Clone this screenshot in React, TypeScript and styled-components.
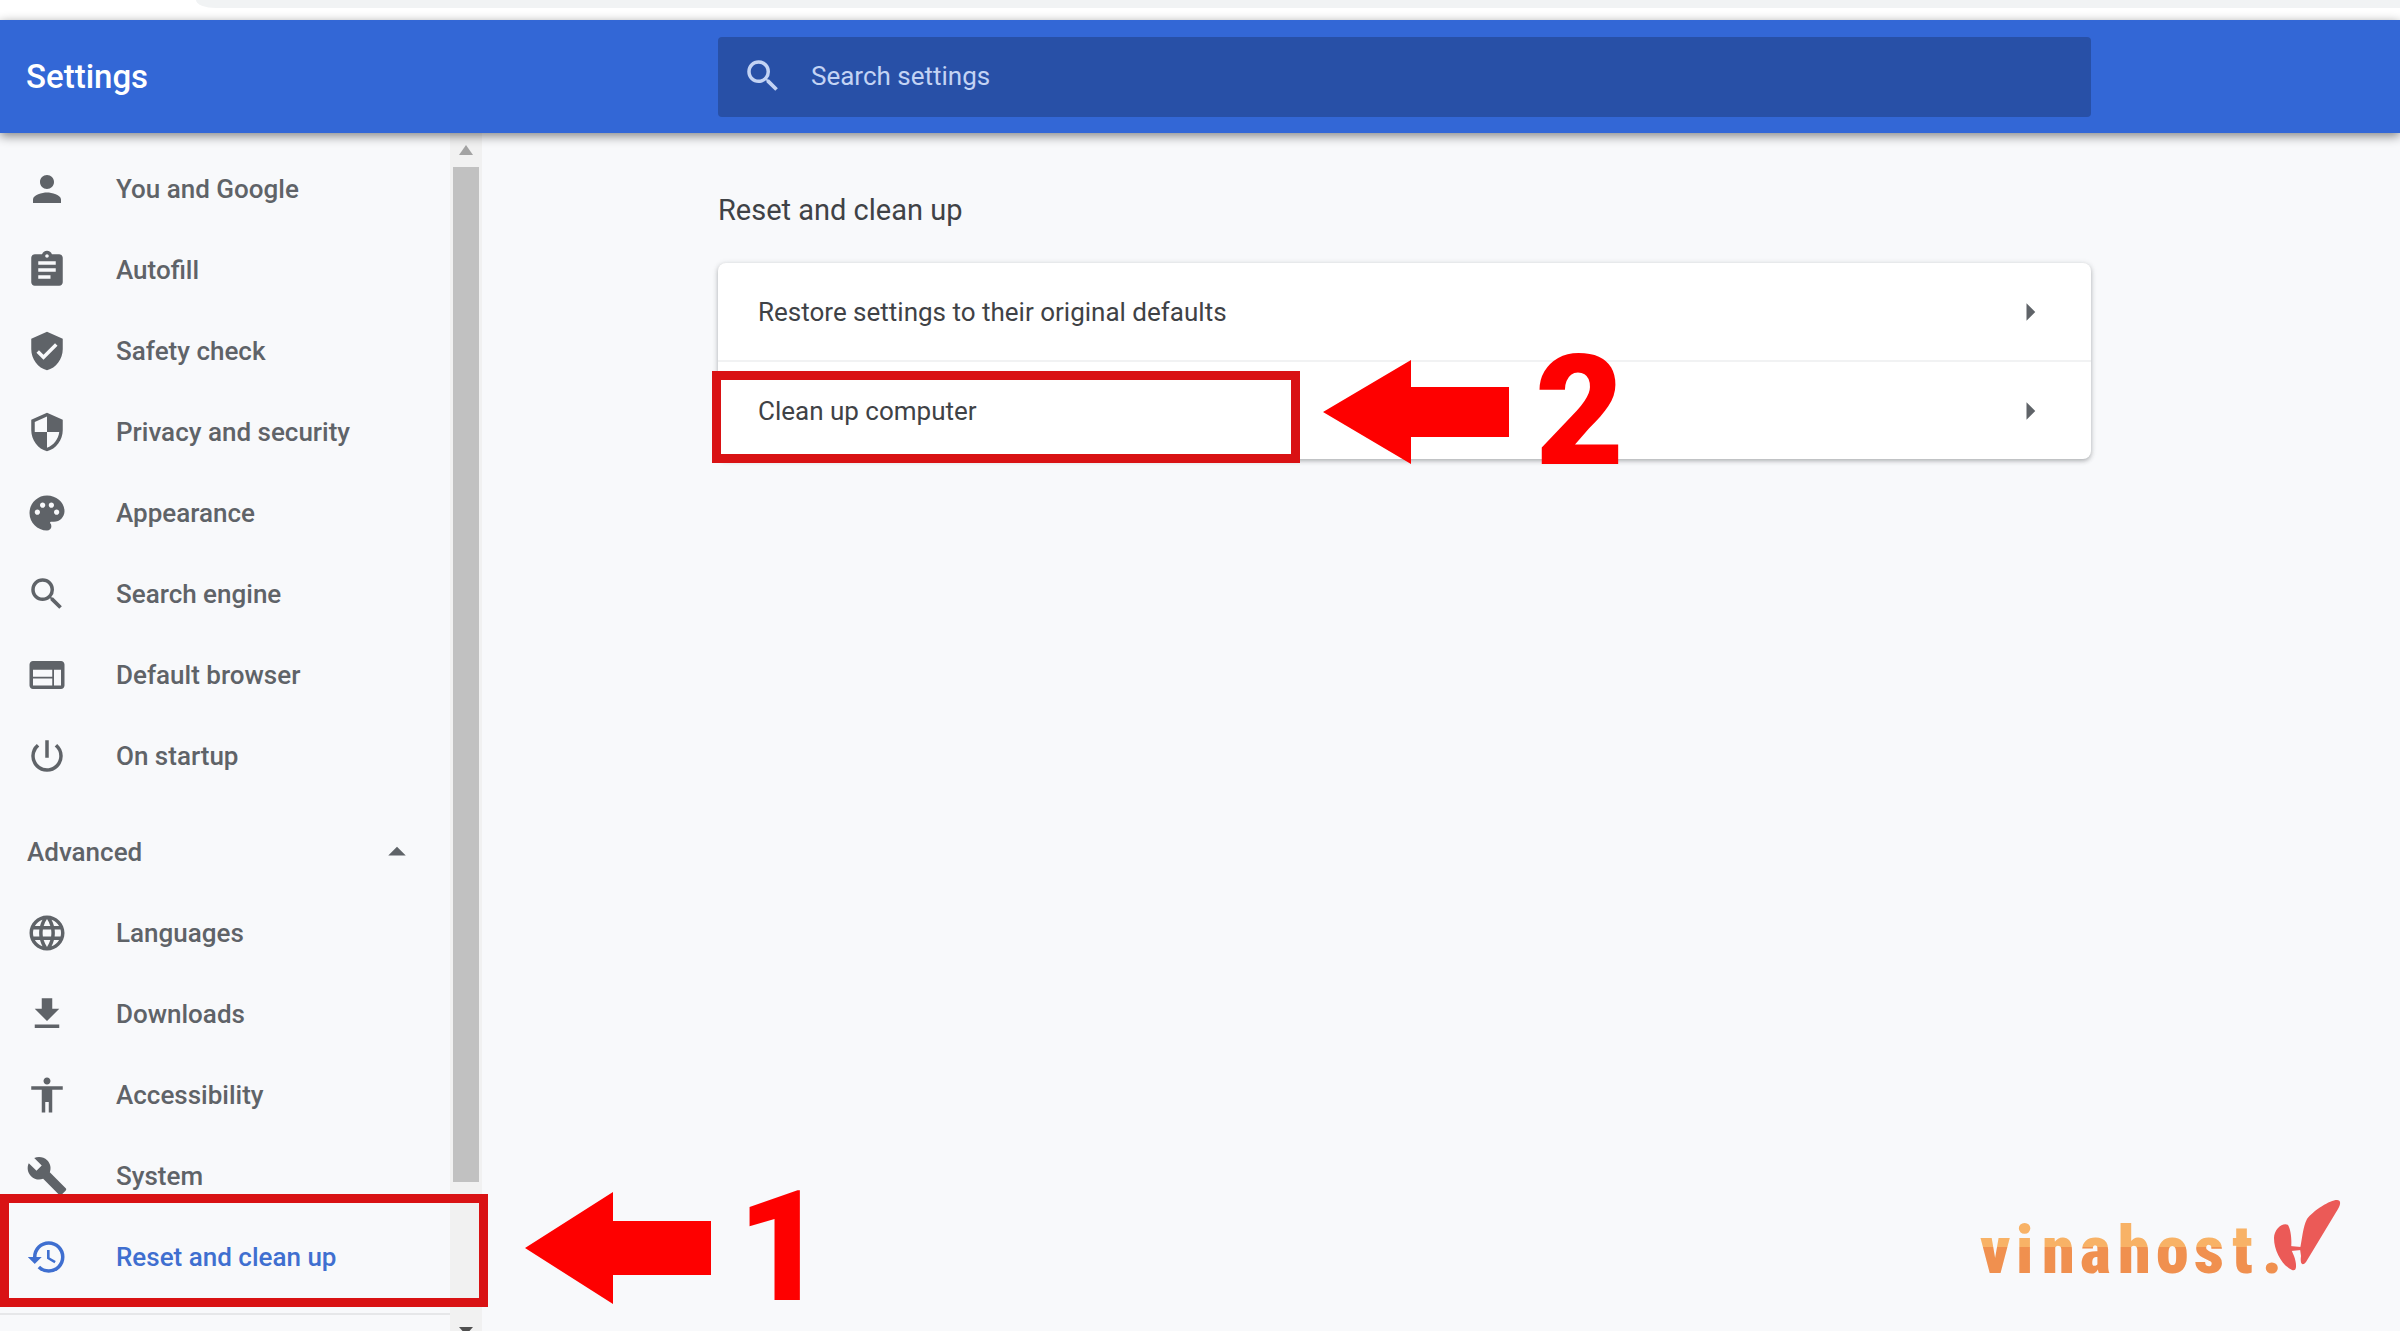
import React from 'react';
import styled, { createGlobalStyle } from 'styled-components';
import {
  MdAccessibility,
  MdArrowDropUp,
  MdArrowRight,
  MdAssignment,
  MdBuild,
  MdHistory,
  MdLanguage,
  MdPalette,
  MdPerson,
  MdPowerSettingsNew,
  MdSearch,
  MdSecurity,
  MdVerifiedUser,
  MdWeb,
} from 'react-icons/md';

const GlobalStyle = createGlobalStyle`
  * { box-sizing: border-box; }
  body {
    margin: 0;
    background: #f8f9fb;
    color: #3f4246;
    font-family: Roboto, "Liberation Sans", sans-serif;
    font-size: 26px;
    line-height: 32px;
  }
  button, input { font: inherit; color: inherit; }
`;

const Page = styled.div`
  display: flex;
  flex-direction: column;
  height: 100vh;
  overflow: hidden;
  position: relative;
`;

const BrowserStrip = styled.div`
  flex: none;
  height: 20px;
  padding-left: 196px;
  background: #fff;
`;

const AddressBarEdge = styled.div`
  height: 8px;
  background: #f1f3f4;
  border-bottom-left-radius: 20px 8px;
`;

const Header = styled.header`
  flex: none;
  display: flex;
  align-items: center;
  height: 113px;
  background: #3367d6;
  box-shadow: 0 3px 10px rgba(0, 0, 0, 0.48);
  z-index: 1;
`;

const Title = styled.h1`
  flex: none;
  width: 718px;
  margin: 0;
  padding-left: 26px;
  color: #fff;
  font-size: 33px;
  font-weight: 500;
  line-height: 40px;
`;

const SearchBox = styled.label`
  flex: 0 1 1373px;
  display: flex;
  align-items: center;
  gap: 27px;
  height: 80px;
  padding: 0 24px 2px;
  border-radius: 4px;
  background: #2850a7;
  color: #c3d3f4;
  svg { flex: none; width: 42px; height: 42px; }
`;

const SearchInput = styled.input`
  flex: 1;
  min-width: 0;
  padding: 0;
  border: 0;
  outline: 0;
  background: transparent;
  &::placeholder { color: #c3d3f4; opacity: 1; }
`;

const Body = styled.div`
  flex: 1;
  min-height: 0;
  display: flex;
`;

const Sidebar = styled.aside`
  flex: none;
  display: flex;
  width: 482px;
`;

const Nav = styled.nav`
  flex: 1;
  padding-top: 15px;
`;

const NavList = styled.ul`
  margin: 0;
  padding: 0;
  list-style: none;
`;

const NavRow = styled.li`
  position: relative;
`;

const NavLink = styled.a<{ $active?: boolean }>`
  display: flex;
  align-items: center;
  gap: 48px;
  height: 81px;
  padding-left: 26px;
  color: ${(p) => (p.$active ? '#3f6fd0' : '#5f6368')};
  font-weight: 500;
  text-decoration: none;
  svg { flex: none; width: 42px; height: 42px; }
`;

const AdvancedToggle = styled.button`
  display: flex;
  align-items: center;
  justify-content: space-between;
  width: 100%;
  height: 81px;
  margin-top: 15px;
  padding: 0 32px 0 27px;
  border: 0;
  background: none;
  color: #5f6368;
  font-weight: 500;
  svg { width: 42px; height: 42px; }
`;

const NavDivider = styled.hr`
  margin: 16px 0 0;
  border: 0;
  border-top: 2px solid #e6e7e9;
`;

const Scrollbar = styled.div`
  flex: none;
  display: flex;
  flex-direction: column;
  width: 32px;
  padding: 0 3px;
  background: #f1f1f1;
`;

const ScrollCap = styled.div<{ $height: number }>`
  flex: none;
  display: flex;
  justify-content: center;
  align-items: center;
  height: ${(p) => p.$height}px;
`;

const ScrollThumb = styled.div`
  flex: 7;
  background: #c1c1c1;
`;

const ScrollRest = styled.div`
  flex: 1;
`;

const Main = styled.main`
  flex: 1;
  padding: 57px 40px 0 236px;
`;

const SectionTitle = styled.h2`
  margin: 0 0 33px;
  font-size: 29px;
  font-weight: 400;
  line-height: 40px;
`;

const Card = styled.section`
  max-width: 1373px;
  border-radius: 8px;
  background: #fff;
  box-shadow: 0 2px 4px rgba(60, 64, 67, 0.3), 0 1px 6px rgba(60, 64, 67, 0.15);
`;

const CardRow = styled.div`
  position: relative;
  & + & { border-top: 2px solid #f1f2f3; }
`;

const CardButton = styled.button`
  display: flex;
  align-items: center;
  justify-content: space-between;
  width: 100%;
  height: 97px;
  padding: 0 40px;
  border: 0;
  background: none;
  text-align: left;
  svg { width: 42px; height: 42px; color: #5f6368; }
`;

/* Red frames and arrows that lie over the settings page */
const NavFrame = styled.div`
  position: absolute;
  inset: -22px -38px -10px 0;
  border: 9px solid #d91214;
  pointer-events: none;
`;

const RowFrame = styled.div`
  position: absolute;
  top: 9px;
  bottom: -4px;
  left: -6px;
  width: 588px;
  border: 9px solid #d91214;
  pointer-events: none;
`;

const Callout = styled.div<{ $left: number; $top: number }>`
  position: absolute;
  left: ${(p) => p.$left}px;
  top: ${(p) => p.$top}px;
  display: flex;
  align-items: center;
  gap: 26px;
  color: #fe0000;
  font-size: 154px;
  font-weight: 900;
  line-height: 112px;
  pointer-events: none;
  svg { flex: none; }
`;

const Brand = styled.div`
  position: absolute;
  right: 56px;
  bottom: 39px;
  svg { display: block; }
`;

const DownloadIcon = () => (
  <svg viewBox="0 0 24 24" fill="currentColor" aria-hidden="true">
    <path d="M19 9h-4V3H9v6H5l7 7 7-7zM5 18v2h14v-2H5z" />
  </svg>
);

const Arrow = ({ height }: { height: number }) => (
  <svg
    width="186"
    height={height}
    viewBox="0 0 186 112"
    preserveAspectRatio="none"
    fill="#fe0000"
    aria-hidden="true"
  >
    <path d="M0 56 88 0v29h98v54H88v29z" />
  </svg>
);

const Logo = () => (
  <svg width="364" height="92" viewBox="0 0 364 92" role="img" aria-label="vinahost.">
    <defs>
      <linearGradient id="letters" gradientUnits="userSpaceOnUse" x1="0" y1="0" x2="0" y2="92">
        <stop offset="0.51" stopColor="#f8b266" />
        <stop offset="0.51" stopColor="#f0904f" />
      </linearGradient>
    </defs>
    <text
      x="0 36 62 100 138 176 214 252 282"
      y="73"
      fill="url(#letters)"
      fontFamily="'Roboto Condensed', Roboto, sans-serif"
      fontSize="66"
      fontWeight="900"
    >
      vinahost.
    </text>
    <g fill="#eb5a57">
      <path d="M308 25c-5-3-14 4-14 13 0 14 9 28 18 32 5 2 5-6 2-14l-3-7c1-9 0-19-3-24z" />
      <path d="M327 19c7-9 23-19 30-19 4 0 4 4 1 9l-32 53c-4 5-6 1-5-6l-1-7c2-9 3-23 7-30z" />
      <path d="M310 46l11 1v3l-10 1z" />
    </g>
  </svg>
);

const basicItems = [
  { label: 'You and Google', icon: <MdPerson /> },
  { label: 'Autofill', icon: <MdAssignment /> },
  { label: 'Safety check', icon: <MdVerifiedUser /> },
  { label: 'Privacy and security', icon: <MdSecurity /> },
  { label: 'Appearance', icon: <MdPalette /> },
  { label: 'Search engine', icon: <MdSearch /> },
  { label: 'Default browser', icon: <MdWeb /> },
  { label: 'On startup', icon: <MdPowerSettingsNew /> },
];

const advancedItems = [
  { label: 'Languages', icon: <MdLanguage /> },
  { label: 'Downloads', icon: <DownloadIcon /> },
  { label: 'Accessibility', icon: <MdAccessibility /> },
  { label: 'System', icon: <MdBuild /> },
];

export default function App() {
  return (
    <>
      <GlobalStyle />
      <Page>
        <BrowserStrip>
          <AddressBarEdge />
        </BrowserStrip>
        <Header>
          <Title>Settings</Title>
          <SearchBox>
            <MdSearch />
            <SearchInput type="text" placeholder="Search settings" aria-label="Search settings" />
          </SearchBox>
        </Header>
        <Body>
          <Sidebar>
            <Nav>
              <NavList>
                {basicItems.map((item) => (
                  <NavRow key={item.label}>
                    <NavLink href="#">
                      {item.icon}
                      {item.label}
                    </NavLink>
                  </NavRow>
                ))}
              </NavList>
              <AdvancedToggle type="button" aria-expanded="true">
                Advanced
                <MdArrowDropUp />
              </AdvancedToggle>
              <NavList>
                {advancedItems.map((item) => (
                  <NavRow key={item.label}>
                    <NavLink href="#">
                      {item.icon}
                      {item.label}
                    </NavLink>
                  </NavRow>
                ))}
                <NavRow>
                  <NavLink href="#" $active aria-current="page">
                    <MdHistory />
                    Reset and clean up
                  </NavLink>
                  <NavFrame />
                  <Callout $left={525} $top={-24}>
                    <Arrow height={112} />
                    <span>1</span>
                  </Callout>
                </NavRow>
              </NavList>
              <NavDivider />
            </Nav>
            <Scrollbar aria-hidden="true">
              <ScrollCap $height={34}>
                <svg width="14" height="10" viewBox="0 0 14 10" fill="#a3a3a3">
                  <path d="M0 10 7 0l7 10z" />
                </svg>
              </ScrollCap>
              <ScrollThumb />
              <ScrollRest />
              <ScrollCap $height={4}>
                <svg width="14" height="10" viewBox="0 0 14 10" fill="#505050">
                  <path d="M0 3h14l-7 8z" />
                </svg>
              </ScrollCap>
            </Scrollbar>
          </Sidebar>
          <Main>
            <SectionTitle>Reset and clean up</SectionTitle>
            <Card>
              <CardRow>
                <CardButton type="button">
                  Restore settings to their original defaults
                  <MdArrowRight />
                </CardButton>
              </CardRow>
              <CardRow>
                <CardButton type="button">
                  Clean up computer
                  <MdArrowRight />
                </CardButton>
                <RowFrame />
                <Callout $left={605} $top={-6}>
                  <Arrow height={104} />
                  <span>2</span>
                </Callout>
              </CardRow>
            </Card>
          </Main>
        </Body>
        <Brand>
          <Logo />
        </Brand>
      </Page>
    </>
  );
}
